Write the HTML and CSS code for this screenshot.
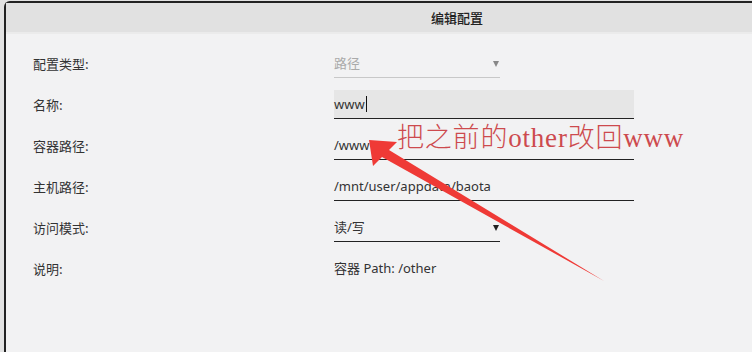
FILE: index.html
```html
<!DOCTYPE html>
<html lang="zh-CN">
<head>
  <meta charset="UTF-8" />
  <title>编辑配置</title>
  <link rel="stylesheet" href="styles.css">
</head>
<body>
  <div class="dialog">
    <header class="dialog-head">编辑配置</header>

    <div class="form">
      <div class="row">
        <label>配置类型:</label>
        <div class="field select disabled">路径<span class="caret"></span></div>
      </div>
      <div class="row">
        <label>名称:</label>
        <div class="field text active">www<span class="cursor"></span></div>
      </div>
      <div class="row">
        <label>容器路径:</label>
        <div class="field text">/www</div>
      </div>
      <div class="row">
        <label>主机路径:</label>
        <div class="field text">/mnt/user/appdata/baota</div>
      </div>
      <div class="row">
        <label>访问模式:</label>
        <div class="field select">读/写<span class="caret"></span></div>
      </div>
      <div class="row">
        <label>说明:</label>
        <div class="field plain">容器 Path: /other</div>
      </div>
    </div>
  </div>

  <!-- annotation drawn over the screenshot -->
  <div class="note">把之前的other改回www</div>
  <svg class="arrow" width="752" height="352" viewBox="0 0 752 352">
    <polygon points="369,140 397,142 389,150 604,281 382,157 373,166" fill="#ef3a36" />
  </svg>
</body>
</html>
```

FILE: styles.css
```css
* {
  margin: 0;
  padding: 0;
  box-sizing: border-box;
}

body {
  width: 752px;
  height: 352px;
  overflow: hidden;
  position: relative;
  background-color: #e2e2e2;
  font-family: 'Noto Sans', 'Noto Sans CJK SC', sans-serif;
  font-size: 13px;
  color: #333;
}

.dialog {
  width: 748px;
  height: 351px;
  margin: 1px 0 0 4px;
  border-top: 2px solid #222;
  border-left: 2px solid #222;
  border-top-left-radius: 6px;
  background-color: #f2f2f3;
}

/* the dialog is wider than the shot, so the title sits right of centre */
.dialog-head {
  height: 31px;
  padding-left: 156px;
  background-color: #e1e1e1;
  border-bottom: 2px solid #ebebeb;
  text-align: center;
  line-height: 30px;
  font-family: 'Noto Sans CJK SC', sans-serif;
  font-weight: 500;
  color: #222;
}

.form {
  padding: 15px 0 0 27px;
  display: flex;
  flex-direction: column;
  gap: 12px;
}

.row {
  display: flex;
  align-items: center;
}

.row label {
  width: 301px;
  font-family: 'Noto Sans CJK SC', sans-serif;
  color: #333;
}

.field {
  position: relative;
  height: 29px;
  line-height: 28px;
  border-bottom: 1px solid #222;
  color: #333;
}

.field.text {
  width: 300px;
}

.field.active {
  background-color: #e6e6e6;
}

.field.select {
  width: 166px;
}

.field.disabled {
  color: #aaa;
  border-bottom-color: #c8c8c8;
}

.field.plain {
  border-bottom: none;
}

.caret {
  position: absolute;
  right: 1px;
  top: 12px;
  border-left: 3px solid transparent;
  border-right: 3px solid transparent;
  border-top: 6px solid #222;
}

.disabled .caret {
  border-top-color: #888;
}

.cursor {
  display: inline-block;
  width: 1px;
  height: 16px;
  margin-left: 1px;
  vertical-align: -3px;
  background-color: #111;
}

.note {
  position: absolute;
  left: 397px;
  top: 121px;
  font-family: 'Liberation Serif', 'Noto Sans CJK SC', serif;
  font-size: 27px;
  font-weight: 300;
  line-height: 34px;
  letter-spacing: 0.8px;
  color: #cd4a4e;
}

.arrow {
  position: absolute;
  left: 0;
  top: 0;
}
```
